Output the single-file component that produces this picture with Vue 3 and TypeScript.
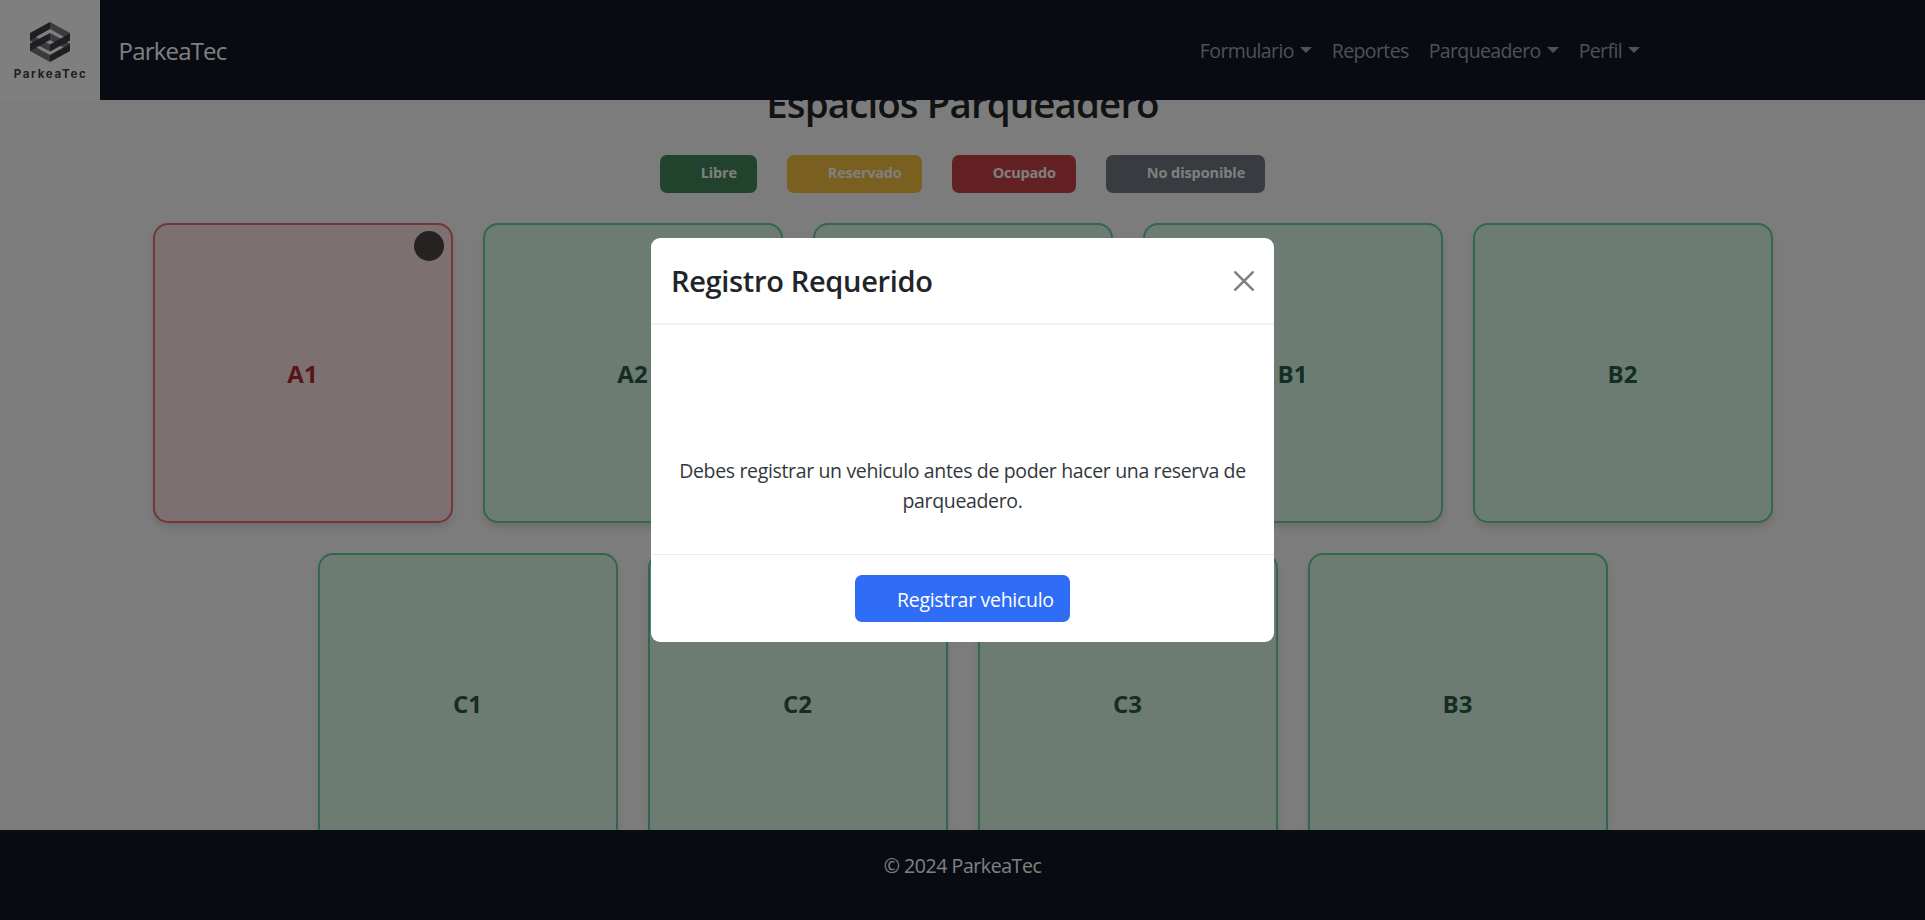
<script setup lang="ts">
interface NavItem { label: string; dropdown: boolean }
interface Legend { label: string; cls: string }
interface Space { id: string; busy?: boolean }

const nav: NavItem[] = [
  { label: 'Formulario', dropdown: true },
  { label: 'Reportes', dropdown: false },
  { label: 'Parqueadero', dropdown: true },
  { label: 'Perfil', dropdown: true },
]
const legend: Legend[] = [
  { label: 'Libre', cls: 'free' },
  { label: 'Reservado', cls: 'reserved' },
  { label: 'Ocupado', cls: 'busy' },
  { label: 'No disponible', cls: 'off' },
]
const rows: Space[][] = [
  [{ id: 'A1', busy: true }, { id: 'A2' }, { id: 'A3' }, { id: 'B1' }, { id: 'B2' }],
  [{ id: 'C1' }, { id: 'C2' }, { id: 'C3' }, { id: 'B3' }],
]
</script>

<template>
  <div class="page">
    <header class="navbar">
      <div class="logo">
        <svg class="mark" viewBox="0 0 40 40">
          <g fill="#75777c">
            <path d="M20 0 40 11 33.5 14.500 20 7z" />
            <path d="M0 19 6.500 15.500 20 22.500V29.500z" />
            <path d="M20 11 40 21.500 33.500 25.500 20 18z" />
            <path d="M0 21.500 6.500 25.500 20 33V40L0 29z" />
          </g>
          <g fill="#3c3e43">
            <path d="M20 0V7L6.500 14.500V15.500L0 19V11z" />
            <path d="M40 11V18.500L20 29.500V22.500L33.500 15V14.500z" />
            <path d="M0 21.500 20 11V18L6.500 25.500 0 29z" />
            <path d="M40 21.500V29L20 40V33L33.500 25.500z" />
          </g>
        </svg>
        <span class="logo-text">ParkeaTec</span>
      </div>
      <span class="brand">ParkeaTec</span>
      <nav class="links">
        <a v-for="n in nav" :key="n.label"><span>{{ n.label }}</span><i v-if="n.dropdown" class="caret"></i></a>
      </nav>
    </header>

    <main class="content">
      <h2 class="title">Espacios Parqueadero</h2>
      <div class="legend">
        <span v-for="l in legend" :key="l.label" class="badge" :class="l.cls">{{ l.label }}</span>
      </div>
      <div class="rows">
        <div v-for="(r, i) in rows" :key="i" class="row">
          <div v-for="s in r" :key="s.id" class="space" :class="{ taken: s.busy }">
            <span v-if="s.busy" class="dot"></span>
            <span>{{ s.id }}</span>
          </div>
        </div>
      </div>
    </main>

    <footer class="footer">© 2024 ParkeaTec</footer>

    <div class="backdrop">
      <section class="modal">
        <div class="modal-head">
          <h3>Registro Requerido</h3>
          <svg class="close" viewBox="0 0 20 20"><path d="M1.300 1.300 18.700 18.700M18.700 1.300 1.300 18.700" /></svg>
        </div>
        <div class="modal-body">
          <p>Debes registrar un vehiculo antes de poder hacer una reserva de<br>parqueadero.</p>
        </div>
        <div class="modal-foot"><button type="button">Registrar vehiculo</button></div>
      </section>
    </div>
  </div>
</template>

<style>
body { margin: 0; overflow: hidden; }
</style>

<style scoped>
* { box-sizing: border-box; }
.page {
  position: relative;
  display: flex;
  flex-direction: column;
  height: 920px;
  overflow: hidden;
  background: #f8f8f8;
  color: #212529;
  font: 400 19.500px/30px "Segoe UI", "Open Sans", "Noto Sans", sans-serif;
}
.navbar { position: relative; z-index: 1; display: flex; flex: none; align-items: center; height: 100px; background: #101624; color: #fff; }
.logo { display: flex; flex-direction: column; align-items: center; width: 99.500px; height: 100px; padding-top: 22px; background: #fff; }
.mark { width: 40px; height: 40px; }
.logo-text { margin-top: 4px; color: #3d3f44; font: 700 11.500px/16px "Inter", sans-serif; letter-spacing: 1.700px; margin-right: -1.700px; }
.brand { margin-left: 19px; padding-top: 2px; font-size: 24px; letter-spacing: -.8px; }
.links { display: flex; gap: 20px; margin-left: auto; margin-right: 285px; padding-top: 2px; color: #a0a2a8; letter-spacing: -.62px; }
.links a { display: flex; align-items: center; }
.caret { margin: -2px 0 0 6px; border: 6px solid transparent; border-top-color: currentColor; border-bottom: 0; }
.content { flex: 1; min-height: 0; }
.title { margin: -21px 0 0; font-size: 38.500px; font-weight: 600; line-height: 48px; letter-spacing: -.9px; text-align: center; }
.legend { display: flex; justify-content: center; gap: 30px; margin-top: 28px; }
.badge { height: 38px; padding: 0 20px 0 41px; border-radius: 7px; color: #fff; font-size: 14.500px; font-weight: 700; line-height: 35px; letter-spacing: -.2px; }
.badge:last-child { letter-spacing: -.1px; }
.free { background: #42865a; }
.reserved { background: #f4c040; }
.busy { background: #c84248; }
.off { background: #707680; }
.rows { display: flex; flex-direction: column; gap: 30px; margin-top: 30px; }
.row { display: flex; justify-content: center; gap: 30px; }
.space {
  position: relative; display: flex; align-items: center; justify-content: center; flex: none;
  width: 300px; height: 300px; padding-top: 1px; border: 2px solid #64cc9a; border-radius: 15px;
  background: #d8f8e4; box-shadow: 0 5px 7px rgba(0, 0, 0, .1); color: #285c48;
  font-size: 24px; font-weight: 700;
}
.space.taken { border-color: #e86c6c; background: #f8e2e0; color: #b02a2a; }
.dot { position: absolute; top: 6px; right: 7px; width: 30px; height: 30px; border-radius: 50%; background: #4c4444; }
.footer { position: relative; z-index: 1; flex: none; height: 90px; padding-top: 21px; background: #101624; color: #fff; text-align: center; letter-spacing: -.43px; }
.backdrop { position: absolute; z-index: 2; inset: 0; display: flex; justify-content: center; align-items: flex-start; padding-top: 238px; background: rgba(0, 0, 0, .5); }
.modal { display: flex; flex-direction: column; width: 623px; height: 404px; border-radius: 9px; background: #fff; overflow: hidden; }
.modal-head { display: flex; align-items: center; justify-content: space-between; height: 87px; padding: 0 20px; border-bottom: 2px solid #f1f1f1; }
h3 { margin: 0; font-size: 29px; font-weight: 600; line-height: 45px; letter-spacing: -.33px; }
.close { width: 20px; height: 20px; fill: none; stroke: #808080; stroke-width: 2.600; stroke-linecap: round; }
.modal-body { flex: 1; padding-top: 131px; color: #33373b; text-align: center; letter-spacing: -.35px; }
.modal-body p { margin: 0; white-space: nowrap; }
.modal-foot { display: flex; justify-content: center; height: 88px; padding-top: 20px; border-top: 1px solid #eee; }
button { width: 215px; height: 47px; padding: 3px 0 0 42px; border: 0; border-radius: 7px; background: #306df6; color: #fff; font: inherit; letter-spacing: -.3px; text-align: left; white-space: nowrap; }
</style>
